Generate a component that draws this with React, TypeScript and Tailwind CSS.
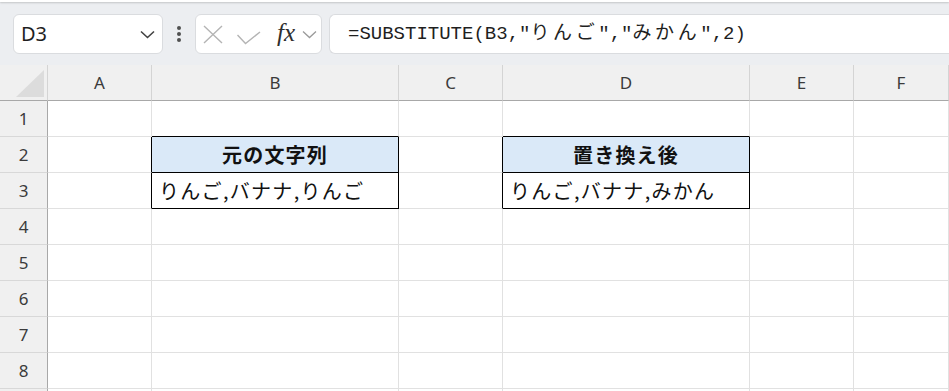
import React from 'react';

const cols = ['A', 'B', 'C', 'D', 'E', 'F'];
const rows = [1, 2, 3, 4, 5, 6, 7, 8, 9];

type Cell = { text?: string; head?: boolean; r?: boolean; b?: boolean };

// black borders around B2:B3 and D2:D3 (Excel style: drawn on neighbour edges)
const cells: Record<string, Cell> = {
  B1: { b: true },
  D1: { b: true },
  A2: { r: true },
  A3: { r: true },
  C2: { r: true },
  C3: { r: true },
  B2: { text: '元の文字列', head: true, r: true, b: true },
  B3: { text: 'りんご,バナナ,りんご', r: true, b: true },
  D2: { text: '置き換え後', head: true, r: true, b: true },
  D3: { text: 'りんご,バナナ,みかん', r: true, b: true },
};

const uiFont = "font-['Segoe_UI','Noto_Sans','Open_Sans',sans-serif]";
const cellFont = "font-['Noto_Sans_CJK_JP',sans-serif]";

const Jp = ({ children }: { children: string }) => (
  <span className="tracking-[3.6px]">{children}</span>
);

const Toolbar = () => (
  <div className="h-[65px] bg-[#eceef1] flex flex-col">
    <div className="h-[2px] bg-white shadow-[0_1px_2px_rgba(0,0,0,0.18)]" />
    <div className="flex items-center pt-[12px]">
      <div className="ml-[13px] w-[150px] h-[40px] rounded-[6px] border border-[#dadcdf] bg-white flex items-center justify-between pl-[7px] pr-[7px]">
        <span className={`${uiFont} text-[20px] text-[#1f1f1f] leading-none`}>D3</span>
        <svg width="15" height="9" viewBox="0 0 15 9" fill="none">
          <path d="M1 1.5 L7.5 7.5 L14 1.5" stroke="#424242" strokeWidth="1.6" />
        </svg>
      </div>
      <div className="w-[32px] flex flex-col items-center gap-[2.5px]">
        <span className="w-[3.5px] h-[3.5px] rounded-full bg-[#505050]" />
        <span className="w-[3.5px] h-[3.5px] rounded-full bg-[#505050]" />
        <span className="w-[3.5px] h-[3.5px] rounded-full bg-[#505050]" />
      </div>
      <div className="w-[127px] h-[40px] rounded-[6px] border border-[#dadcdf] bg-white flex items-center pl-[7px]">
        <svg width="20" height="19" viewBox="0 0 20 19" fill="none">
          <path d="M1 1 L19 18 M19 1 L1 18" stroke="#b4b4b4" strokeWidth="1.4" />
        </svg>
        <svg width="24" height="14" viewBox="0 0 24 14" fill="none" className="ml-[14px] mt-[7px]">
          <path d="M0.5 4 L8.5 12.5 L23 1" stroke="#b4b4b4" strokeWidth="1.4" />
        </svg>
        <span className="ml-[16px] font-['Liberation_Serif',serif] italic text-[25px] text-[#2e2e2e] leading-none -mt-[3px]">
          fx
        </span>
        <svg width="15" height="9" viewBox="0 0 15 9" fill="none" className="ml-[7px]">
          <path d="M1 1.5 L7.5 7.5 L14 1.5" stroke="#9a9a9a" strokeWidth="1.3" />
        </svg>
      </div>
      <div className="ml-[7px] flex-1 h-[40px] rounded-l-[6px] border border-r-0 border-[#dadcdf] bg-white flex items-center pl-[18px]">
        <span className="font-['Liberation_Mono','Noto_Sans_CJK_JP',monospace] text-[19px] text-[#1f1f1f] leading-none whitespace-pre">
          =SUBSTITUTE(B3,"<Jp>りんご</Jp>","<Jp>みかん</Jp>",2)
        </span>
      </div>
    </div>
  </div>
);

const Sheet = () => (
  <div className="grid grid-cols-[48px_104px_247px_104px_247px_104px_1fr] grid-rows-[repeat(10,36px)]">
    <div className="bg-[#f0f0f0] border-r border-b border-r-[#d4d4d4] border-b-[#a8a8a8] flex items-end justify-end pr-[3px] pb-[3px]">
      <div className="w-[28px] h-[27px] bg-[#dcdcdc] [clip-path:polygon(100%_0,100%_100%,0_100%)]" />
    </div>
    {cols.map((c) => (
      <div
        key={c}
        className={`${uiFont} bg-[#f0f0f0] border-r border-b border-r-[#d4d4d4] border-b-[#a8a8a8] flex items-center justify-center text-[17px] text-[#3b3b3b]`}
      >
        {c}
      </div>
    ))}
    {rows.map((r) => (
      <React.Fragment key={r}>
        <div
          className={`${uiFont} bg-[#f0f0f0] border-r border-b border-r-[#a8a8a8] border-b-[#d8d8d8] flex items-center justify-center text-[17px] text-[#3b3b3b]`}
        >
          {r < 9 ? r : ''}
        </div>
        {cols.map((c) => {
          const cell = cells[`${c}${r}`] ?? {};
          return (
            <div
              key={c}
              className={`border-r border-b ${cell.r ? 'border-r-black' : 'border-r-[#e1e1e1]'} ${
                cell.b ? 'border-b-black' : 'border-b-[#e1e1e1]'
              } ${
                cell.head
                  ? 'bg-[#dae9f8] justify-center font-bold tracking-[1.2px]'
                  : 'justify-start pl-[7px] tracking-[1.3px]'
              } ${cellFont} flex items-center text-[20px] text-[#111] whitespace-nowrap overflow-hidden`}
            >
              {cell.text}
            </div>
          );
        })}
      </React.Fragment>
    ))}
  </div>
);

export default function App() {
  return (
    <div className="w-[949px] h-[391px] overflow-hidden bg-white">
      <Toolbar />
      <Sheet />
    </div>
  );
}
